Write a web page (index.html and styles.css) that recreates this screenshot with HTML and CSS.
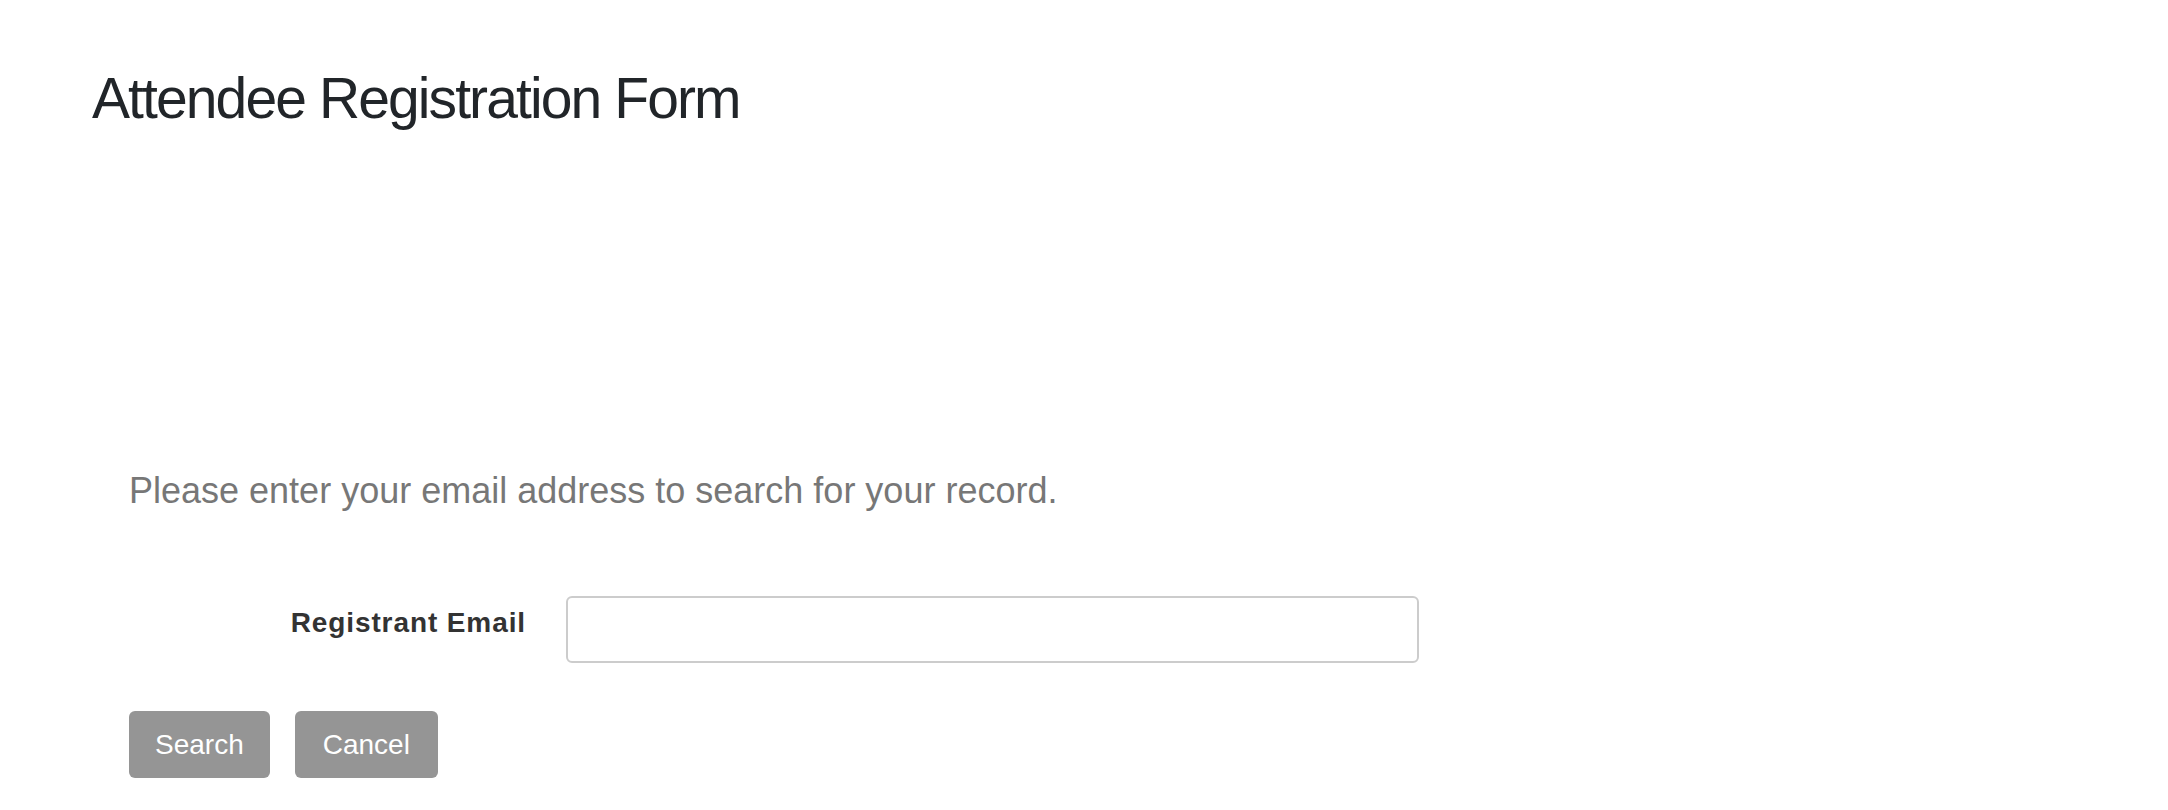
FILE: index.html
```html
<!DOCTYPE html>
<html>
<head>
<meta charset="utf-8">
<title>Attendee Registration Form</title>
<link rel="stylesheet" href="styles.css">
</head>
<body>
<div class="page">
  <h1 class="title">Attendee Registration Form</h1>
  <form class="form">
    <p class="intro">Please enter your email address to search for your record.</p>
    <div class="row">
      <label class="label" for="email">Registrant Email</label>
      <input class="input" id="email" type="text">
    </div>
    <div class="actions">
      <button type="button" class="btn">Search</button>
      <button type="button" class="btn btn-cancel">Cancel</button>
    </div>
  </form>
</div>
</body>
</html>
```
FILE: styles.css
```css
html, body {
  margin: 0;
  padding: 0;
  background: #ffffff;
}
body {
  font-family: "Liberation Sans", Arial, Helvetica, sans-serif;
}
.page {
  padding: 70px 0 0 92px;
}
.title {
  margin: 0;
  font-size: 57px;
  line-height: 57px;
  font-weight: normal;
  letter-spacing: -1.9px;
  color: #212529;
}
.form {
  margin: 346px 0 0 37px;
}
.intro {
  margin: 0;
  font-size: 36px;
  line-height: 35px;
  color: #777777;
}
.row {
  display: flex;
  align-items: flex-start;
  gap: 40px;
  margin-top: 88px;
}
.label {
  width: 397px;
  text-align: right;
  padding-top: 13px;
  font-size: 28px;
  line-height: 28px;
  font-weight: bold;
  letter-spacing: 0.9px;
  color: #333333;
}
.input {
  box-sizing: border-box;
  width: 853px;
  height: 67px;
  margin: 0;
  border: 2px solid #cccccc;
  border-radius: 6px;
  background: #ffffff;
  outline: none;
}
.actions {
  display: flex;
  gap: 25px;
  margin-top: 48px;
}
.btn {
  height: 67px;
  padding: 0 26px;
  border: none;
  border-radius: 6px;
  background: #959595;
  color: #ffffff;
  font-family: "Liberation Sans", Arial, Helvetica, sans-serif;
  font-size: 28px;
  line-height: 67px;
}
.btn-cancel {
  padding: 0 28px;
}
```
